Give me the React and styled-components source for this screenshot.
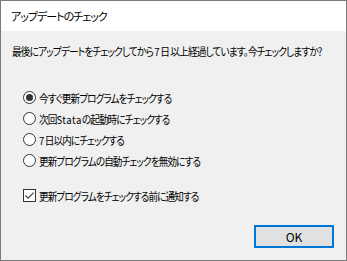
import styled, { createGlobalStyle } from "styled-components";
import { useState } from "react";

const GlobalStyle = createGlobalStyle`
  html, body {
    margin: 0;
    padding: 0;
    background: #ffffff;
  }
  * {
    box-sizing: border-box;
  }
`;

const App = () => {
  const [choice, setChoice] = useState(0);
  const [notify, setNotify] = useState(true);

  const options = [
    "今すぐ更新プログラムをチェックする",
    <>次回<Latin>Stata</Latin>の起動時にチェックする</>,
    <><Latin>7</Latin>日以内にチェックする</>,
    "更新プログラムの自動チェックを無効にする",
  ];

  return (
    <>
      <GlobalStyle />
      <Dialog>
        <TitleBar>アップデートのチェック</TitleBar>
        <Body>
          <Message>
            最後にアップデートをチェックしてから{"\u2002"}<Latin>7</Latin>日{"\u2002"}以上経過しています。今チェックしますか？
          </Message>
          <OptionList>
            {options.map((label, i) => (
              <OptionRow key={i} onClick={() => setChoice(i)}>
                <Radio $checked={choice === i} />
                <Label>{label}</Label>
              </OptionRow>
            ))}
          </OptionList>
          <OptionRow $check onClick={() => setNotify(!notify)}>
            <CheckBox>
              {notify && (
                <svg width="11" height="11" viewBox="0 0 11 11">
                  <path d="M1.5 5.5 L4.2 8.2 L9.6 2.6" fill="none" stroke="#444" strokeWidth="1.2" />
                </svg>
              )}
            </CheckBox>
            <Label>更新プログラムをチェックする前に通知する</Label>
          </OptionRow>
          <Footer>
            <OkButton>OK</OkButton>
          </Footer>
        </Body>
      </Dialog>
    </>
  );
};

export default App;

const Dialog = styled.div`
  width: 347px;
  height: 261px;
  border: 1px solid #7a7a7a;
  display: flex;
  flex-direction: column;
  font-family: "Noto Sans CJK JP", "Noto Sans", sans-serif;
  font-feature-settings: "palt", "pwid";
  font-size: 11px;
  color: #000;
`;

const TitleBar = styled.div`
  height: 30px;
  background: #ffffff;
  display: flex;
  align-items: center;
  padding-left: 10px;
  padding-bottom: 1px;
  letter-spacing: -1px;
`;

const Body = styled.div`
  flex: 1;
  background: #f0f0f0;
  display: flex;
  flex-direction: column;
  padding: 12px 12px 12px 11px;
  letter-spacing: -1px;
`;

/* the dialog font has condensed kana, so the body text is narrowed a little */
const Message = styled.div`
  line-height: 16px;
  white-space: nowrap;
  transform: scaleX(0.88);
  transform-origin: left center;
`;

const Latin = styled.span`
  letter-spacing: 0.6px;
`;

const OptionList = styled.div`
  margin-top: 28px;
  display: flex;
  flex-direction: column;
`;

const OptionRow = styled.div`
  height: 21px;
  display: flex;
  align-items: center;
  gap: 3px;
  padding-left: 11px;
  margin-top: ${(p) => (p.$check ? "14px" : "0")};
  white-space: nowrap;
`;

const Label = styled.span`
  display: inline-block;
  line-height: 16px;
  transform: scaleX(0.87);
  transform-origin: left center;
`;

const Radio = styled.span`
  width: 13px;
  height: 13px;
  border-radius: 50%;
  border: 1px solid #333;
  background: #fff;
  display: flex;
  align-items: center;
  justify-content: center;
  flex-shrink: 0;
  &::after {
    content: "";
    width: 7px;
    height: 7px;
    border-radius: 50%;
    background: ${(p) => (p.$checked ? "#333" : "transparent")};
  }
`;

const CheckBox = styled.span`
  width: 13px;
  height: 13px;
  border: 1px solid #333;
  background: #fff;
  display: flex;
  align-items: center;
  justify-content: center;
  flex-shrink: 0;
`;

const Footer = styled.div`
  margin-top: auto;
  display: flex;
  justify-content: flex-end;
`;

const OkButton = styled.button`
  width: 80px;
  height: 23px;
  border: 2px solid #0078d7;
  background: #e1e1e1;
  font-family: "Noto Sans CJK JP", "Noto Sans", sans-serif;
  font-size: 12px;
  letter-spacing: 0;
  color: #000;
  padding: 0;
`;
